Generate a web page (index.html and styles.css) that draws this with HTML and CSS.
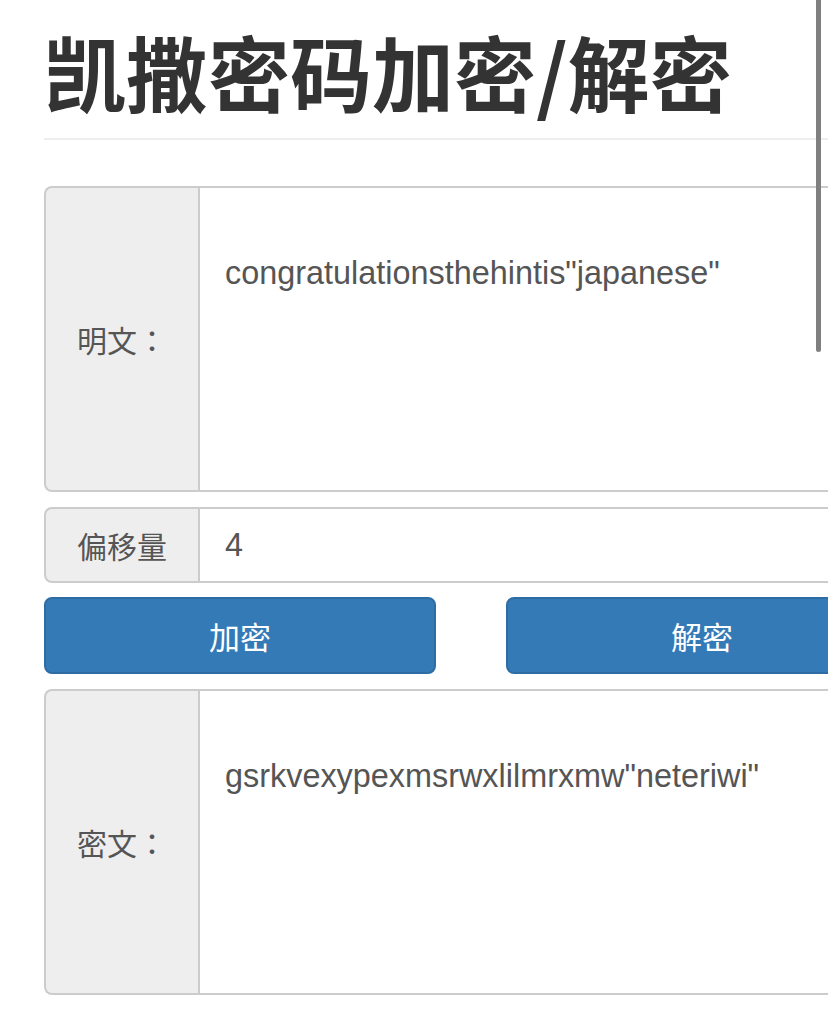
FILE: index.html
```html
<!DOCTYPE html>
<html lang="zh-CN">
  <head>
    <meta charset="UTF-8" />
    <meta name="viewport" content="width=device-width, initial-scale=1.0" />
    <title>凯撒密码加密/解密</title>
    <link rel="stylesheet" href="styles.css">
  </head>
  <body>
    <div class="scroll-indicator"></div>
    <div class="container">
      <div class="page-header">
        <h1>凯撒密码加密/解密</h1>
      </div>

      <div class="input-group tall">
        <span class="addon" lang="ja">明文：</span>
        <textarea class="field" id="plain">congratulationsthehintis"japanese"</textarea>
      </div>

      <div class="input-group">
        <span class="addon">偏移量</span>
        <input class="field" id="offset" type="text" value="4" />
      </div>

      <div class="button-row">
        <button class="btn">加密</button>
        <button class="btn">解密</button>
      </div>

      <div class="input-group tall">
        <span class="addon" lang="ja">密文：</span>
        <textarea class="field" id="cipher">gsrkvexypexmsrwxlilmrxmw"neteriwi"</textarea>
      </div>
    </div>
  </body>
</html>
```

FILE: styles.css
```css
html,
body {
  overflow: hidden;
}
body {
  margin: 0;
  background: #fff;
  color: #333;
  font-family: "Liberation Sans", "Noto Sans CJK SC", sans-serif;
  font-size: 28px;
  line-height: 1.42857;
}
.container {
  width: 854px;
  margin-left: 44px;
}
.page-header {
  padding-bottom: 22px;
  margin-bottom: 46px;
  border-bottom: 2px solid #eee;
}
.page-header h1 {
  margin: 0;
  padding-top: 26px;
  font-family: "Noto Sans CJK SC", sans-serif;
  font-size: 82px;
  font-weight: 700;
  line-height: 1.1;
  color: #333;
}
.input-group {
  display: flex;
  height: 76px;
  margin-bottom: 14px;
}
.input-group.tall {
  height: 306px;
  margin-bottom: 15px;
}
.addon {
  display: flex;
  align-items: center;
  justify-content: center;
  width: 152px;
  background: #eee;
  border: 2px solid #ccc;
  border-right: none;
  border-radius: 8px 0 0 8px;
  color: #555;
  font-family: "Noto Sans CJK JP", "Noto Sans CJK SC", sans-serif;
  font-size: 30px;
  text-spacing-trim: space-all;
}
.field {
  flex: 1;
  margin: 0;
  padding: 0 25px;
  border: 2px solid #ccc;
  border-radius: 0 8px 8px 0;
  background: #fff;
  color: #555;
  font-family: "Liberation Sans", "Noto Sans CJK SC", sans-serif;
  font-size: 32.4px;
  line-height: 1.42857;
  outline: none;
}
textarea.field {
  padding-top: 62px;
  resize: none;
}
.button-row {
  display: grid;
  grid-template-columns: 392px 392px;
  gap: 70px;
  margin-bottom: 15px;
}
.btn {
  height: 77px;
  background-color: #337ab7;
  border: 2px solid #2e6da4;
  border-radius: 8px;
  color: #fff;
  font-family: "Noto Sans CJK SC", sans-serif;
  font-size: 31px;
  cursor: pointer;
}
.scroll-indicator {
  position: fixed;
  top: 0;
  left: 816px;
  width: 5px;
  height: 352px;
  background: #7f7f7f;
  border-radius: 0 0 3px 3px;
  z-index: 10;
}
```
